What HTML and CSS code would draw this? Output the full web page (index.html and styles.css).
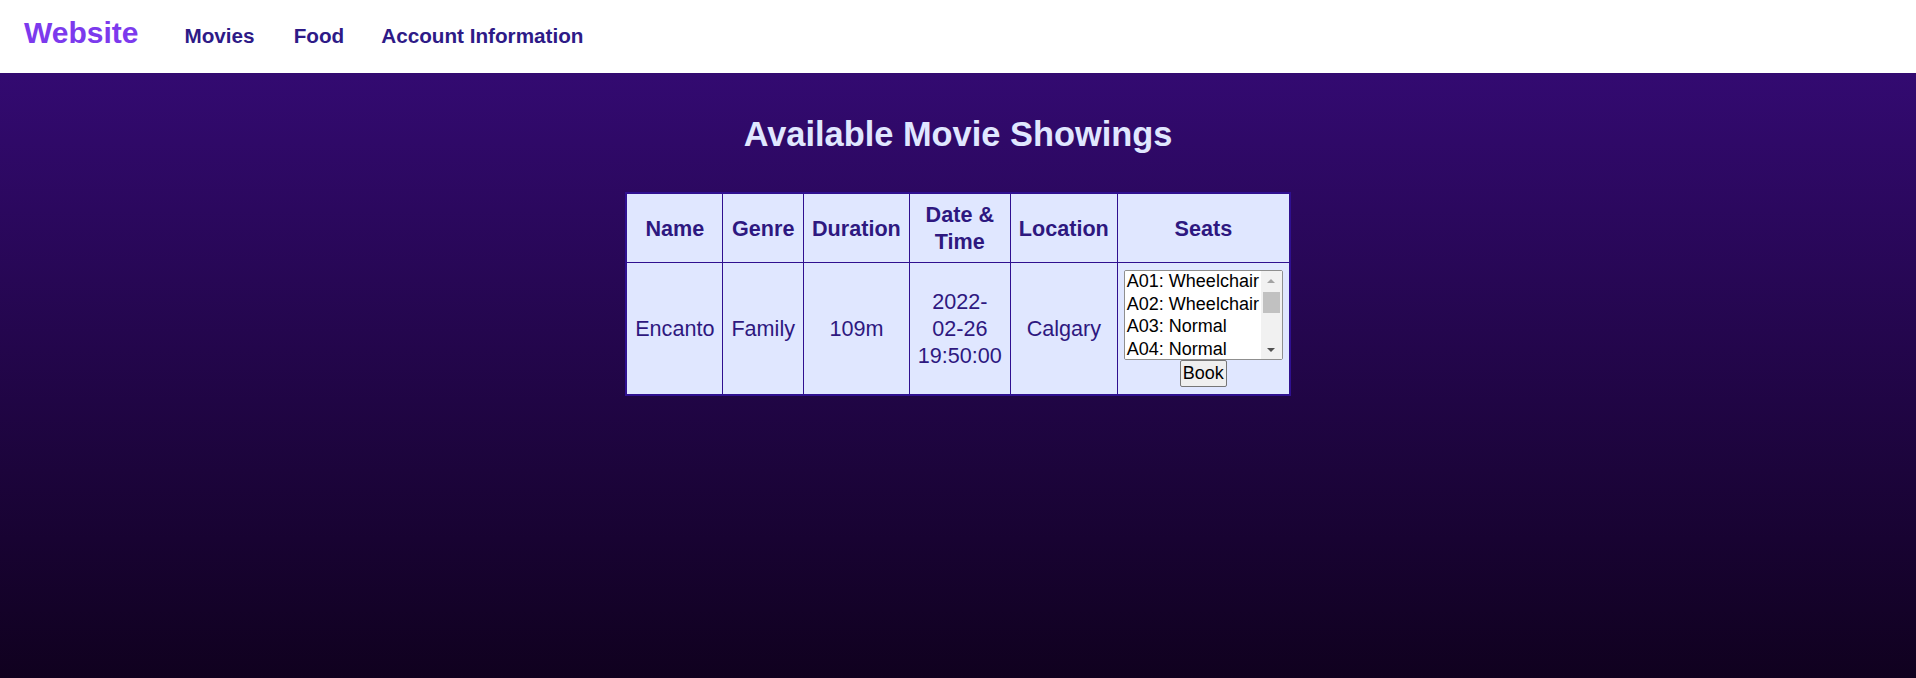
FILE: index.html
```html
<!DOCTYPE html>
<html lang="en">
<head>
<meta charset="utf-8">
<title>Website</title>
<link rel="stylesheet" href="styles.css">
</head>
<body>
<nav class="navbar">
  <a class="brand" href="#">Website</a>
  <a class="nav-link" href="#">Movies</a>
  <a class="nav-link" href="#">Food</a>
  <a class="nav-link last" href="#">Account Information</a>
</nav>
<main class="content">
  <h1 class="title">Available Movie Showings</h1>
  <table class="showings">
    <thead>
      <tr>
        <th>Name</th>
        <th>Genre</th>
        <th>Duration</th>
        <th>Date &amp; Time</th>
        <th>Location</th>
        <th>Seats</th>
      </tr>
    </thead>
    <tbody>
      <tr>
        <td>Encanto</td>
        <td>Family</td>
        <td>109m</td>
        <td>2022-02-26 19:50:00</td>
        <td>Calgary</td>
        <td class="seats-cell">
          <span class="select-wrap">
            <select class="seat-select" size="4">
              <option>A01: Wheelchair</option>
              <option>A02: Wheelchair</option>
              <option>A03: Normal</option>
              <option>A04: Normal</option>
              <option>A05: Normal</option>
              <option>A06: Normal</option>
              <option>A07: Normal</option>
              <option>A08: Normal</option>
              <option>A09: Normal</option>
              <option>A10: Normal</option>
            </select>
            <span class="fake-scroll" aria-hidden="true">
              <span class="scroll-btn"><span class="arrow-up"></span></span>
              <span class="scroll-track"><span class="scroll-thumb"></span></span>
              <span class="scroll-btn"><span class="arrow-down"></span></span>
            </span>
          </span>
          <button class="book-btn" type="button">Book</button>
        </td>
      </tr>
    </tbody>
  </table>
</main>
</body>
</html>
```

FILE: styles.css
```css
html, body {
  margin: 0;
  padding: 0;
}

body {
  font-family: "Liberation Sans", Arial, sans-serif;
  background: #10011f;
}

.navbar {
  box-sizing: border-box;
  height: 73px;
  background: #ffffff;
  display: flex;
  align-items: baseline;
  padding: 16px 24px 0;
}

.brand {
  font-size: 30px;
  font-weight: bold;
  color: #7c3aed;
  text-decoration: none;
  margin-right: 46px;
}

.nav-link {
  font-size: 20.7px;
  font-weight: bold;
  color: #2e1a87;
  text-decoration: none;
  margin-right: 39px;
}

.nav-link.last {
  margin-left: -2px;
}

.content {
  box-sizing: border-box;
  min-height: calc(100vh - 73px);
  padding: 42px 0 40px;
  background: linear-gradient(to bottom, #330a71 0%, #10011f 100%);
}

.title {
  margin: 0 0 38px;
  text-align: center;
  font-size: 34.4px;
  font-weight: bold;
  color: #e0e7ff;
}

.showings {
  width: min-content;
  margin: 0 auto;
  border-collapse: collapse;
  border: 2px solid #2f1090;
  background: #e0e7ff;
  color: #2e1880;
  font-size: 21.6px;
  line-height: 27px;
}

.showings th,
.showings td {
  border: 1px solid #2f1090;
  padding: 7px 8px;
  text-align: center;
  vertical-align: middle;
}

.showings th {
  font-weight: bold;
}

.showings td.seats-cell {
  line-height: 0;
  padding: 7px 6px;
}

.select-wrap {
  position: relative;
  display: inline-block;
  vertical-align: top;
}

.seat-select {
  display: block;
  box-sizing: border-box;
  width: 159px;
  height: 90px;
  font-family: "Liberation Sans", Arial, sans-serif;
  font-size: 18px;
  color: #000;
  background: #fff;
  border: 1px solid #8f8f8f;
  border-radius: 2px;
  margin: 0;
  padding: 0;
}

.seat-select option {
  padding: 0 2px 1px;
}

.fake-scroll {
  position: absolute;
  top: 1px;
  right: 1px;
  bottom: 1px;
  width: 21px;
  background: #f1f1f1;
  display: flex;
  flex-direction: column;
  border-radius: 0 1px 1px 0;
}

.scroll-btn {
  height: 19px;
  display: flex;
  align-items: center;
  justify-content: center;
}

.scroll-track {
  flex: 1;
  display: flex;
  flex-direction: column;
}

.scroll-thumb {
  height: 21px;
  margin: 2px 2px 0;
  background: #c1c1c1;
}

.arrow-up {
  width: 0;
  height: 0;
  border-left: 4.5px solid transparent;
  border-right: 4.5px solid transparent;
  border-bottom: 4px solid #a3a3a3;
}

.arrow-down {
  width: 0;
  height: 0;
  border-left: 4.5px solid transparent;
  border-right: 4.5px solid transparent;
  border-top: 4px solid #505050;
}

.book-btn {
  box-sizing: border-box;
  height: 27px;
  font-family: "Liberation Sans", Arial, sans-serif;
  font-size: 18px;
  line-height: 21px;
  color: #000;
  background: #efefef;
  border: 1px solid #767676;
  border-radius: 2px;
  padding: 2px 2px;
  margin: 0;
  vertical-align: top;
}
```
